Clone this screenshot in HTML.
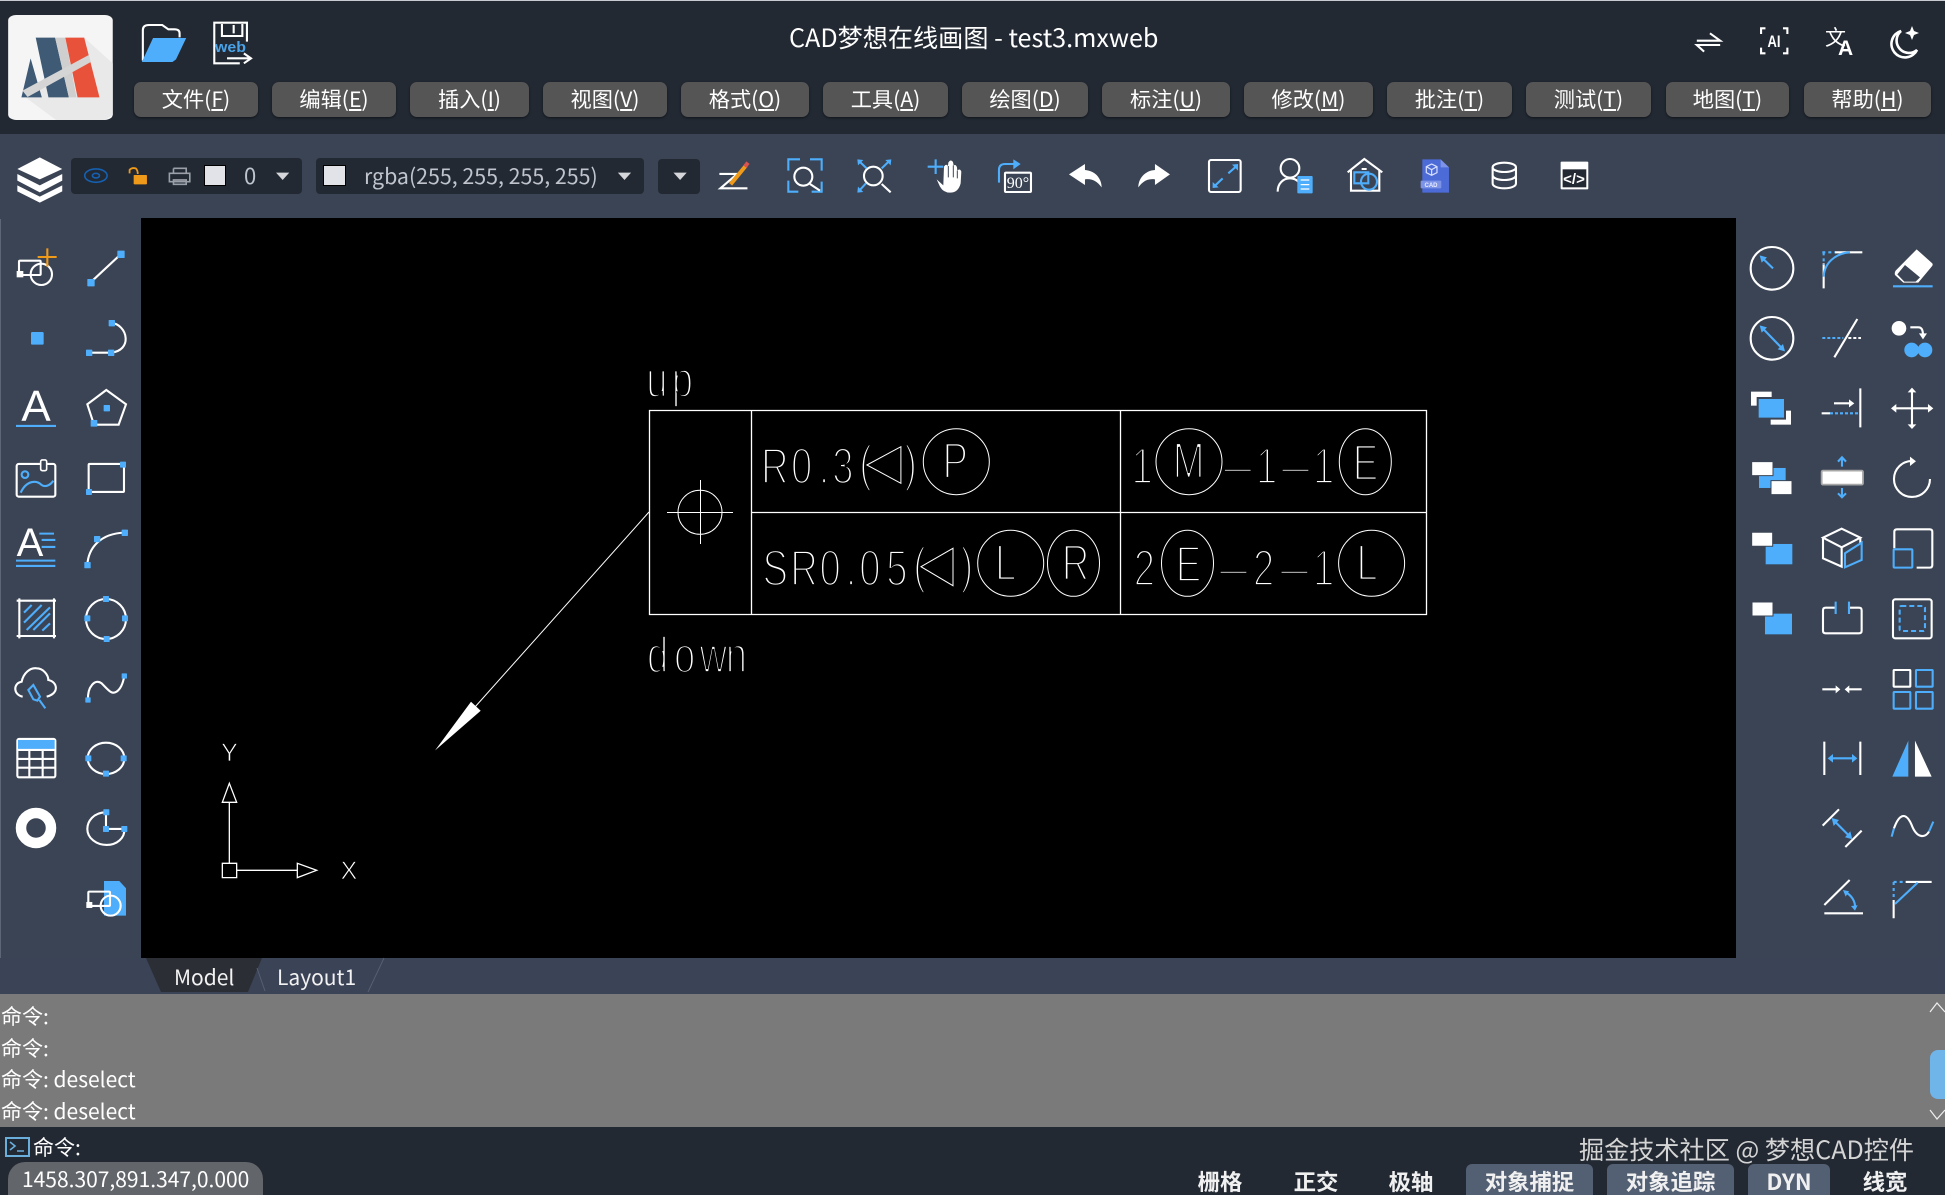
<!DOCTYPE html>
<html lang="zh"><head><meta charset="utf-8"><title>CAD梦想在线画图</title>
<style>
html,body{margin:0;padding:0;width:1945px;height:1195px;overflow:hidden;background:#3b4454}
body{position:relative;font-family:"Noto Sans CJK SC","Liberation Sans",sans-serif;color:#fff}
.a{position:absolute}
.t{position:absolute;white-space:nowrap;line-height:1}
.m{position:absolute;top:82px;height:35px;background:#555;border-radius:7px;box-shadow:0 1px 2px rgba(0,0,0,.5);color:#fff;font-size:21.2px;line-height:34px;text-align:center;white-space:nowrap}
.p{position:absolute;background:#222933;border-radius:4px}
.sb{position:absolute;top:1164px;height:31px;border-radius:6px 6px 0 0;background:#535f72;font-size:22.4px;font-weight:bold;line-height:34px;text-align:center;color:#f0f0f0}
.sn{background:none}
.cmd{position:absolute;left:1px;font-size:21px;line-height:26px;color:#fff;white-space:nowrap}
svg{position:absolute;left:0;top:0}
svg path,svg line,svg rect,svg circle,svg ellipse,svg polyline,svg polygon{vector-effect:non-scaling-stroke}
.w{stroke:#fff;fill:none;stroke-width:2.1}
.b{stroke:#4eaefc;fill:none;stroke-width:2.1}
.fw{fill:#fff;stroke:none}
.fb{fill:#4eaefc;stroke:none}
.s{fill:#4eaefc;stroke:none}
.c{font-family:"Liberation Sans",sans-serif;font-size:51px;fill:#fff;stroke:#000;stroke-width:2.7}
.l{stroke:#fff;fill:none;stroke-width:1}
.l2{stroke:#fff;fill:none;stroke-width:1.3}
</style></head><body>
<div class="a" style="left:0;top:0;width:1945px;height:134px;background:#222933"></div>
<div class="a" style="left:0;top:0;width:1945px;height:1px;background:#c8ccd2"></div>
<div class="a" style="left:0;top:134px;width:1945px;height:85px;background:#3b4454"></div>
<div class="a" style="left:0;top:219px;width:1px;height:775px;background:#5d6676"></div>
<div class="a" style="left:141px;top:218px;width:1595px;height:740px;background:#000"></div>
<div class="a" style="left:0;top:958px;width:1945px;height:36px;background:#3b4356"></div>
<div class="a" style="left:0;top:994px;width:1945px;height:133px;background:#7a7a7a"></div>
<div class="a" style="left:0;top:1127px;width:1945px;height:68px;background:#222933"></div>

<div class="t" style="left:789px;top:25px;font-size:25.15px">CAD梦想在线画图 - test3.mxweb</div>

<div class="m" style="left:134px;width:124px">文件(<u>F</u>)</div>
<div class="m" style="left:272px;width:124px">编辑(<u>E</u>)</div>
<div class="m" style="left:410px;width:119px">插入(<u>I</u>)</div>
<div class="m" style="left:543px;width:124px">视图(<u>V</u>)</div>
<div class="m" style="left:681px;width:128px">格式(<u>O</u>)</div>
<div class="m" style="left:823px;width:125px">工具(<u>A</u>)</div>
<div class="m" style="left:962px;width:126px">绘图(<u>D</u>)</div>
<div class="m" style="left:1102px;width:128px">标注(<u>U</u>)</div>
<div class="m" style="left:1244px;width:129px">修改(<u>M</u>)</div>
<div class="m" style="left:1387px;width:125px">批注(<u>T</u>)</div>
<div class="m" style="left:1526px;width:125px">测试(<u>T</u>)</div>
<div class="m" style="left:1666px;width:123px">地图(<u>T</u>)</div>
<div class="m" style="left:1804px;width:127px">帮助(<u>H</u>)</div>

<div class="p" style="left:71px;top:158px;width:231px;height:36px"></div>
<div class="p" style="left:316px;top:158px;width:328px;height:36px"></div>
<div class="p" style="left:658px;top:159px;width:42px;height:35px"></div>
<div class="a" style="left:204px;top:165px;width:22px;height:21px;background:#e2e3e8;border:1px solid #000;box-sizing:border-box"></div>
<div class="a" style="left:323px;top:165px;width:23px;height:21px;background:#e2e3e8;border:1px solid #000;box-sizing:border-box"></div>
<div class="t" style="left:244px;top:164px;font-size:22px;color:#c0c4cc">0</div>
<div class="t" style="left:364px;top:165px;font-size:21.35px;color:#c0c4cc">rgba(255, 255, 255, 255)</div>

<div class="t" style="left:174px;top:967px;font-size:21px;color:#f2f2f2;z-index:2">Model</div>
<div class="t" style="left:277px;top:967px;font-size:21px;color:#f2f2f2;z-index:2">Layout1</div>

<div class="cmd" style="top:1003px">命令:</div>
<div class="cmd" style="top:1035px">命令:</div>
<div class="cmd" style="top:1066px">命令: deselect</div>
<div class="cmd" style="top:1098px">命令: deselect</div>
<div class="a" style="left:1930px;top:1050px;width:15px;height:49px;background:#6fb5ea;border-radius:8px 0 0 8px"></div>

<div class="t" style="left:33px;top:1137px;font-size:21px">命令:</div>
<div class="a" style="left:8px;top:1162px;width:255px;height:33px;background:#62656a;border-radius:17px 17px 0 0"></div>
<div class="t" style="left:22px;top:1169px;font-size:21px;color:#fff">1458.307,891.347,0.000</div>
<div class="t" style="left:1579px;top:1137px;font-size:25.15px;color:#d4d4d4">掘金技术社区 @ 梦想CAD控件</div>

<div class="sb sn" style="left:1190px;width:60px">栅格</div>
<div class="sb sn" style="left:1286px;width:60px">正交</div>
<div class="sb sn" style="left:1381px;width:60px">极轴</div>
<div class="sb" style="left:1466px;width:127px">对象捕捉</div>
<div class="sb" style="left:1607px;width:127px">对象追踪</div>
<div class="sb" style="left:1748px;width:82px">DYN</div>
<div class="sb sn" style="left:1855px;width:60px">线宽</div>

<svg width="1945" height="1195" viewBox="0 0 1945 1195">
<!-- logo, top-left icons -->
<g transform="scale(.5102,.3333)">
<rect x="16" y="45" width="205" height="315" rx="16" fill="#f5f5f5"/>
<polygon points="165,113 221,190 221,345 205,360 110,360 50,292" fill="#e9e9e9"/>
<polygon points="70,113 108,113 135,292 95,292" fill="#3f5a75"/>
<polygon points="60,175 82,292 42,292" fill="#3f5a75"/>
<polygon points="108,113 128,113 150,292 135,292" fill="#cfcfcf"/>
<polygon points="128,113 165,113 195,292 152,292" fill="#e9523a"/>
<polygon points="44,272 174,165 178,186 54,291" fill="#d5d5d5"/>
<path class="w" d="M280 182 V90 Q280 75 292 75 H318 L330 88 H342 Q352 88 352 100 V112"/>
<polygon class="fb" points="300,114 365,114 345,178 338,186 278,186"/>
<path class="w" d="M484 125 V68 H420 V190 H470 M435 72 V108 H475 V72 M458 75 V100"/>
<path class="w" d="M445 175 H492 M478 160 L492 175 L478 190"/>
</g>
<text x="215" y="52" font-family="Liberation Sans" font-size="15" font-weight="bold" fill="#4aa3e8" textLength="31" lengthAdjust="spacingAndGlyphs">web</text>

<!-- right-top -->
<g transform="translate(800,0) scale(.7303,.3333)">
<path class="w" d="M1228 122 H1260 L1246 100 M1260 135 H1228 L1238 155"/>
<path class="w" d="M1322 85 H1316 V102 M1346 85 H1352 V102 M1316 143 V160 H1322 M1352 143 V160 H1346"/>
</g>
<path d="M1901 31 A13.5 13.5 0 1 0 1917 50 A12 12 0 0 1 1901 31Z" fill="none" stroke="#fff" stroke-width="2.6"/>
<polygon class="fw" points="1912,26 1914,31 1919,33 1914,35 1912,40 1910,35 1905,33 1910,31"/>
<text x="1774" y="47" font-family="Liberation Sans" font-size="17" font-weight="bold" fill="#fff" text-anchor="middle" textLength="13" lengthAdjust="spacingAndGlyphs">AI</text>
<text x="1825" y="45" font-size="21" fill="#fff" font-family="Noto Sans CJK SC,sans-serif">文</text>
<text x="1838" y="55" font-size="21" font-weight="bold" fill="#fff" font-family="Liberation Sans">A</text>

<!-- toolbar left -->
<g transform="scale(.5102,.3333)">
<polygon class="fw" points="78,472 122,507 78,538 34,507"/>
<path fill="#fff" d="M34 522 L78 556 L122 522 V542 L78 577 L34 542Z"/>
<path fill="#fff" d="M34 556 L78 590 L122 556 V574 L78 608 L34 574Z"/>
<ellipse cx="188" cy="527" rx="22" ry="20" fill="none" stroke="#1560b0" stroke-width="1.6"/>
<circle cx="188" cy="527" r="7" fill="none" stroke="#1560b0" stroke-width="1.6"/>
<rect x="262" y="525" width="26" height="28" rx="2" fill="#f09a1a"/>
<path d="M254 520 V510 Q258 502 266 505 Q270 510 270 522" fill="none" stroke="#f09a1a" stroke-width="1.8"/>
<path d="M340 505 H365 V520 M340 520 V505 M332 520 H372 V545 H332Z M340 540 H365 V553 H340Z" fill="none" stroke="#9ba0a8" stroke-width="1.6"/>
<polygon points="541,518 567,518 554,540" fill="#d4d6da"/>
<polygon points="1211,518 1237,518 1224,540" fill="#d4d6da"/>
<polygon points="1320,518 1346,518 1333,540" fill="#d4d6da"/>
<path class="w" d="M1410 522 H1445 L1412 565 H1465"/>
<path d="M1432 553 L1462 497" stroke="#f09a1a" stroke-width="4" fill="none"/>
<path d="M1460 500 L1466 488" stroke="#d9534f" stroke-width="4" fill="none"/>
</g>

<!-- toolbar zoom icons -->
<g transform="translate(770,140) scale(.3333)">
<path class="b" d="M55 92 V58 H90 M120 58 H155 V92 M55 122 V155 H85 M125 155 H155 V125"/>
<circle class="w" cx="100" cy="110" r="27"/><path class="w" d="M120 132 L150 152"/>
<circle class="w" cx="310" cy="108" r="28"/><path class="w" d="M335 132 L362 157"/>
<path class="b" d="M265 61 L290 85 M360 61 L335 85 M265 155 L288 130"/>
<polygon class="fb" points="262,58 280,60 264,76"/><polygon class="fb" points="364,58 346,60 362,76"/><polygon class="fb" points="262,158 264,140 280,156"/>
<path class="b" d="M473 80 H520 M497 58 V102"/>
<path class="fw" d="M500 118 L520 136 L522 80 Q528 70 534 78 L535 68 Q542 56 549 66 L551 76 Q558 72 561 82 L562 92 Q570 84 574 95 L572 130 Q565 158 540 158 Q520 158 510 140 Z"/>
<path d="M535 78 V112 M550 76 V112 M562 92 V115" stroke="#3b4454" stroke-width="1" fill="none"/>
<rect class="w" x="705" y="98" width="78" height="58" rx="3"/>
<path class="b" d="M687 128 V90 Q687 72 705 72 H735"/><polygon class="fb" points="730,58 752,72 730,88"/>
<path class="fw" d="M897 103 L945 72 V90 C975 92 995 115 995 142 C980 122 965 115 945 118 V135Z"/>
<path class="fw" d="M1200 103 L1155 72 V90 C1125 92 1105 115 1105 142 C1120 122 1135 115 1155 118 V135Z"/>
</g>
<text x="1018" y="188" font-family="Liberation Serif" font-size="16" fill="#fff" text-anchor="middle">90°</text>

<g transform="translate(1170,140) scale(.3333)">
<rect class="w" x="117" y="60" width="95" height="96" rx="6"/>
<path class="b" d="M200 78 L175 100 M132 140 L158 115"/>
<polygon class="fb" points="204,72 204,92 186,74"/><polygon class="fb" points="128,144 128,126 146,142"/>
<circle class="w" cx="360" cy="85" r="28"/>
<path class="w" d="M323 155 C323 130 340 115 360 115 C370 115 378 118 385 125"/>
<rect class="fb" x="382" y="108" width="46" height="52" rx="3"/>
<path stroke="#fff" stroke-width="1.2" fill="none" d="M392 120 H418 M392 134 H418 M392 147 H418"/>
<path class="w" d="M533 97 L583 57 L637 97 M543 90 V152 H628 V90 M575 87 H590"/>
<rect class="b" x="553" y="97" width="42" height="33"/><circle class="b" cx="597" cy="125" r="24"/>
<path fill="#4d6bd6" d="M757 58 H812 L837 82 V158 H757Z"/><polygon fill="#7c93e8" points="812,58 837,82 812,82"/>
<rect x="752" y="122" width="62" height="23" rx="3" fill="#7c93e8"/>
<path stroke="#d8e0ff" stroke-width="1.2" fill="none" d="M785 72 L801 80 V98 L785 106 L769 98 V80Z M769 80 L785 89 L801 80 M785 89 V106"/>
<ellipse class="w" cx="1003" cy="82" rx="35" ry="14"/>
<path class="w" d="M968 82 V130 C968 150 1038 150 1038 130 V82 M968 105 C968 125 1038 125 1038 105"/>
<rect class="fw" x="1172" y="65" width="83" height="83" rx="3"/>
<rect x="1178" y="88" width="71" height="54" fill="#222933"/>
</g>
<text x="1574" y="184" font-family="Liberation Sans" font-size="15" font-weight="bold" fill="#fff" text-anchor="middle">&lt;/&gt;</text>
<text x="1431" y="187" font-family="Liberation Sans" font-size="6" font-weight="bold" fill="#e8ecff" text-anchor="middle">CAD</text>

<!-- left panel -->
<g transform="translate(0,220) scale(.3333)">
<rect class="w" x="57" y="122" width="65" height="43" rx="3"/><rect class="fw" x="50" y="153" width="20" height="19"/>
<circle class="w" cx="124" cy="163" r="32"/>
<path d="M113 111 H170 M142 85 V140" stroke="#f09a1a" stroke-width="2.1" fill="none"/>
<path class="w" d="M272 187 L362 103"/><rect class="s" x="262" y="177" width="22" height="22" rx="2"/><rect class="s" x="352" y="92" width="22" height="22" rx="2"/>
<rect class="s" x="93" y="336" width="38" height="38" rx="4"/>
<path class="w" d="M268 398 H333 C365 395 378 375 377 355 C376 330 355 310 336 310"/>
<rect class="s" x="258" y="389" width="19" height="19" rx="2"/><rect class="s" x="324" y="389" width="19" height="19" rx="2"/><rect class="s" x="326" y="300" width="19" height="19" rx="2"/>
<path class="b" d="M48 618 H168"/>
<polygon class="w" points="319,510 378,553 356,614 282,614 262,553"/>
<rect class="s" x="311" y="555" width="19" height="19" rx="2"/><rect class="s" x="272" y="600" width="20" height="20" rx="2"/>
<rect class="w" x="50" y="732" width="116" height="98" rx="6"/>
<rect x="122" y="720" width="18" height="32" rx="5" fill="#3b4454" stroke="#fff" stroke-width="1.6"/>
<circle class="b" cx="75" cy="764" r="10"/><path class="b" d="M62 818 C80 780 110 780 125 795 C140 805 155 790 160 782"/>
<rect class="w" x="266" y="732" width="106" height="84" rx="3"/><rect class="s" x="360" y="725" width="18" height="18" rx="2"/><rect class="s" x="258" y="807" width="18" height="18" rx="2"/>
<path class="b" d="M118 941 H162 M125 960 H166 M125 981 H166 M48 1022 H166 M48 1038 H166"/>
<path class="w" d="M262 1035 C265 985 300 940 375 938"/>
<rect class="s" x="253" y="1026" width="19" height="19" rx="2"/><rect class="s" x="282" y="948" width="19" height="19" rx="2"/><rect class="s" x="365" y="929" width="19" height="19" rx="2"/>
</g>
<text x="36" y="421" font-family="Liberation Sans" font-size="44" fill="#fff" text-anchor="middle">A</text>
<text x="30" y="556" font-family="Liberation Sans" font-size="40" fill="#fff" text-anchor="middle">A</text>

<g transform="translate(0,580) scale(.3333)">
<path class="w" d="M50 62 H168 M50 168 H168 M58 55 V175 M162 55 V175"/>
<path class="b" d="M72 98 L95 75 M72 128 L125 75 M80 150 L150 82 M100 150 L150 100 M127 152 L150 130"/>
<circle class="w" cx="318" cy="117" r="60"/>
<rect class="s" x="309" y="48" width="18" height="18" rx="2"/><rect class="s" x="366" y="106" width="18" height="18" rx="2"/><rect class="s" x="311" y="168" width="18" height="18" rx="2"/><rect class="s" x="253" y="106" width="18" height="18" rx="2"/>
<path class="w" d="M68 350 C40 345 38 310 65 305 C70 280 90 262 110 265 C130 265 145 285 145 300 C172 305 180 340 140 350"/>
<path class="b" d="M85 330 L100 315 L120 350 L112 362 L100 358Z M118 360 L136 385"/>
<path class="w" d="M264 360 C262 320 285 295 305 310 C325 330 335 345 350 335 C365 325 370 305 373 288"/>
<rect class="s" x="256" y="352" width="16" height="16" rx="2"/><rect class="s" x="365" y="280" width="16" height="16" rx="2"/>
<rect class="w" x="52" y="477" width="114" height="115" rx="5"/><rect class="fb" x="54" y="480" width="110" height="27"/>
<path class="w" d="M52 510 H166 M52 537 H166 M52 563 H166 M88 510 V590 M128 510 V590"/>
<ellipse class="w" cx="318" cy="535" rx="55" ry="47"/>
<rect class="s" x="256" y="526" width="18" height="18" rx="2"/><rect class="s" x="362" y="526" width="18" height="18" rx="2"/><rect class="s" x="309" y="572" width="18" height="18" rx="2"/>
<circle cx="108" cy="744" r="45" fill="none" stroke="#fff" stroke-width="10.5"/>
<path class="w" d="M318 697 C280 697 262 725 262 747 C262 775 290 795 320 795 C350 795 375 775 373 747 M318 697 V747 H373"/>
<rect class="s" x="310" y="688" width="18" height="18" rx="2"/><rect class="s" x="309" y="738" width="18" height="18" rx="2"/><rect class="s" x="364" y="738" width="18" height="18" rx="2"/>
<path class="fb" d="M312 903 H358 L378 925 V1007 H312Z"/>
<rect class="w" x="265" y="935" width="65" height="43" rx="3" /><rect class="fw" x="259" y="966" width="18" height="18"/>
<circle class="w" cx="332" cy="977" r="30"/>
</g>

<!-- right panel -->
<g transform="translate(1735,220) scale(.3333)">
<circle class="w" cx="111" cy="145" r="64"/><path class="b" d="M114 145 L82 114"/><polygon class="fb" points="74,106 96,112 80,128"/>
<path class="w" d="M266 205 V130 M300 97 H382"/><path class="b" d="M266 170 C268 130 300 100 345 97"/>
<path class="b" stroke-dasharray="3 3" d="M262 97 H300 M266 97 V135"/>
<path class="fw" d="M545 88 L592 130 Q595 135 590 140 L550 188 H505 L480 165 Q478 158 482 152Z"/>
<path d="M510 135 L555 172 L542 185 H508 L487 163Z" fill="#3b4454"/>
<path class="b" d="M474 199 H593"/>
<circle class="w" cx="111" cy="355" r="64"/><path class="b" d="M80 322 L146 390"/><polygon class="fb" points="74,316 96,322 80,338"/><polygon class="fb" points="150,394 128,388 144,372"/>
<path class="w" d="M298 412 L367 297"/><path class="w" stroke-dasharray="3 2" d="M340 354 H378"/><path class="b" stroke-dasharray="3 2" d="M262 354 H325"/>
<circle class="fw" cx="492" cy="325" r="22"/><path class="w" d="M526 322 H550 C560 322 564 330 564 345"/><polygon class="fw" points="552,340 576,340 564,358"/>
<circle class="fb" cx="530" cy="390" r="22"/><circle class="fb" cx="570" cy="390" r="22" stroke="#3b4454" stroke-width="1"/>
<rect class="fw" x="48" y="515" width="62" height="42"/><rect class="fw" x="107" y="572" width="61" height="42"/>
<rect x="68" y="534" width="82" height="62" fill="#4eaefc" stroke="#3b4454" stroke-width="2"/>
<path class="w" d="M376 505 V622 M297 550 H345"/><polygon class="fw" points="342,538 358,550 342,562"/>
<path class="w" d="M260 580 H285"/><path class="b" stroke-dasharray="3 2" d="M285 580 H372"/>
<path class="w" d="M531 515 V615 M480 565 H583"/>
<polygon class="fw" points="531,503 544,517 518,517"/><polygon class="fw" points="531,627 544,613 518,613"/><polygon class="fw" points="468,565 484,552 484,578"/><polygon class="fw" points="595,565 579,552 579,578"/>
<rect class="fb" x="72" y="744" width="80" height="60"/><rect x="50" y="725" width="64" height="42" fill="#fff" stroke="#3b4454" stroke-width="1"/><rect x="108" y="782" width="63" height="42" fill="#fff" stroke="#3b4454" stroke-width="1"/>
<rect x="260" y="752" width="124" height="42" rx="4" fill="#fff" stroke="#a8a8a8" stroke-width="1.8"/>
<path class="b" d="M321 714 V740 M309 725 L321 712 L333 725 M321 804 V830 M309 820 L321 832 L333 820"/>
<path class="w" d="M531 723 A54 54 0 1 0 585 777"/><polygon class="fw" points="525,710 543,724 525,738"/>
<rect class="fb" x="92" y="972" width="80" height="61"/><rect x="50" y="937" width="63" height="42" fill="#fff" stroke="#3b4454" stroke-width="1"/>
<path class="w" d="M320 926 L376 953 L320 982 L264 953Z M264 953 V1015 L320 1040 V982 M376 953 V970"/>
<path class="b" d="M330 1000 L380 968 V1020 L330 1042Z"/>
<path class="w" d="M478 985 V936 Q478 928 486 928 H584 Q592 928 592 936 V1035 Q592 1043 584 1043 H545"/>
<rect class="b" x="476" y="988" width="56" height="55" rx="3"/>
</g>
<g transform="translate(1735,580) scale(.3333)">
<rect class="fb" x="90" y="101" width="81" height="62"/><rect x="51" y="66" width="63" height="42" fill="#fff" stroke="#3b4454" stroke-width="1"/>
<path class="w" d="M302 83 H272 Q264 83 264 91 V152 Q264 160 272 160 H372 Q380 160 380 152 V91 Q380 83 372 83 H342"/>
<path class="b" d="M302 65 V102 M342 65 V102"/>
<rect class="w" x="474" y="58" width="116" height="117" rx="7"/>
<rect class="b" stroke-dasharray="5 3" x="494" y="78" width="76" height="75" rx="5"/>
<path class="w" d="M262 328 H305 M380 328 H340"/>
<polygon class="fw" points="302,316 316,328 302,340"/><polygon class="fw" points="343,316 329,328 343,340"/>
<rect class="w" x="476" y="270" width="50" height="50" rx="2"/><rect class="b" x="543" y="270" width="50" height="50" rx="2"/><rect class="b" x="476" y="336" width="50" height="50" rx="2"/><rect class="b" x="543" y="336" width="50" height="50" rx="2"/>
<path class="w" d="M268 485 V585 M376 485 V585"/><path class="b" d="M290 535 H355"/>
<polygon class="fb" points="278,535 294,522 294,548"/><polygon class="fb" points="367,535 351,522 351,548"/>
<polygon class="fb" points="520,482 520,590 472,590"/><polygon class="fw" points="540,482 540,590 590,590"/>
<path class="w" d="M263 737 L312 688 M331 801 L380 752"/><path class="b" d="M297 722 L346 771"/>
<polygon class="fb" points="290,714 312,720 296,738"/><polygon class="fb" points="352,778 330,772 346,754"/>
<path class="b" d="M470 770 L477 745 M582 755 L595 725"/><path class="w" d="M477 745 C495 695 515 700 530 735 C545 775 570 775 582 755"/>
<path class="w" d="M268 975 L344 900 M268 1000 H384"/>
<path class="b" d="M328 935 C350 945 362 965 360 985"/><polygon class="fb" points="324,930 342,934 332,950"/><polygon class="fb" points="360,992 348,978 368,976"/>
<path class="w" d="M476 1015 V960 M512 906 H590"/><path class="b" stroke-dasharray="3 3" d="M476 906 H510 M476 906 V955"/><path class="b" d="M480 972 L548 908"/>
</g>

<!-- cmd decorations -->
<path d="M1930 1012 L1937 1003 L1945 1012 M1930 1110 L1937 1119 L1945 1110" stroke="#eee" fill="none" stroke-width="1.2"/>
<rect x="6" y="1138" width="23" height="18" fill="none" stroke="#6aaedc" stroke-width="2"/>
<path d="M10 1142 L15 1146 L10 1150 M17 1151 H24" fill="none" stroke="#6aaedc" stroke-width="1.6"/>

<!-- tabs -->
<polygon points="146,958 262,958 248,992 161,992" fill="#2b2e34"/>
<path d="M257 968 L265 991 M384 958 L368 992" stroke="#566074" stroke-width="1" fill="none"/>

<!-- CAD drawing text (real text, thinned by black stroke) -->
<g transform="translate(620,0) scale(.75,1)">
<g class="c">
<text x="35" y="397">u</text><text x="69" y="397">p</text>
<text x="188" y="483.3">R</text><text x="228" y="483.3">0</text><text x="265" y="483.3">.</text><text x="283" y="483.3">3</text><text x="319" y="481">(</text><text x="379" y="481">)</text>
<text x="430" y="478">P</text><text x="682" y="483.3">1</text><text x="737" y="478">M</text><text x="848" y="483.3">1</text><text x="924" y="483.3">1</text><text x="977" y="480">E</text>
<text x="190" y="585.7">S</text><text x="227" y="585.7">R</text><text x="266" y="585.7">0</text><text x="301" y="585.7">.</text><text x="319" y="585.7">0</text><text x="355" y="585.7">5</text><text x="391" y="583">(</text><text x="454" y="583">)</text>
<text x="500" y="580">L</text><text x="589" y="580">R</text><text x="685" y="585.7">2</text><text x="741" y="581.7">E</text><text x="844" y="585.7">2</text><text x="924" y="585.7">1</text><text x="982" y="580">L</text>
<text x="36" y="672.3">d</text><text x="72" y="672.3">o</text><text x="106" y="672.3">w</text><text x="141" y="672.3">n</text>
</g>
</g>
<g transform="translate(620,0) scale(.53,1)">
<g class="c"><text x="1140" y="483.3">—</text><text x="1249" y="483.3">—</text><text x="1132" y="585.7">—</text><text x="1247" y="585.7">—</text></g>
</g>

<!-- CAD drawing lines -->
<rect class="l2" x="649.5" y="410.5" width="777" height="204"/>
<path class="l2" d="M751.5 410.5 V614.5 M1120.5 410.5 V614.5 M751.5 512.5 H1426.5"/>
<circle class="l" cx="700" cy="512.3" r="22"/><path class="l" d="M667 512.5 H733 M700.5 480 V544"/>
<path class="l" d="M649 512 L475 707"/>
<polygon points="435,750.5 471,701.7 480.7,710.7" fill="#fff"/>
<ellipse class="l" cx="956.3" cy="461.7" rx="33" ry="33"/><ellipse class="l" cx="1189" cy="461.7" rx="33" ry="33"/><ellipse class="l" cx="1365.3" cy="461.7" rx="26" ry="33"/>
<ellipse class="l" cx="1010.7" cy="563.3" rx="33" ry="33"/><ellipse class="l" cx="1073.5" cy="563.3" rx="26" ry="33"/><ellipse class="l" cx="1187.5" cy="563.3" rx="26" ry="33"/><ellipse class="l" cx="1371.6" cy="563.3" rx="33" ry="33"/>
<polygon class="l" points="866.9,465 900.9,446.7 900.9,483.3"/><polygon class="l" points="921,566.7 953,548.3 953,585.7"/>

<!-- UCS -->
<g transform="translate(190,700) scale(.3333)">
<polygon class="l2" points="118,250 97,307 140,307"/><path class="l2" d="M118 307 V490 M140 511 H322"/>
<rect class="l2" x="97" y="490" width="43" height="43"/><polygon class="l2" points="322,490 322,533 380,511"/>
</g>
<g font-family="Liberation Sans" font-size="25" fill="#fff" stroke="#000" stroke-width=".8" text-anchor="middle">
<text x="229.5" y="761">Y</text><text x="349" y="879">X</text>
</g>
</svg>
</body></html>
